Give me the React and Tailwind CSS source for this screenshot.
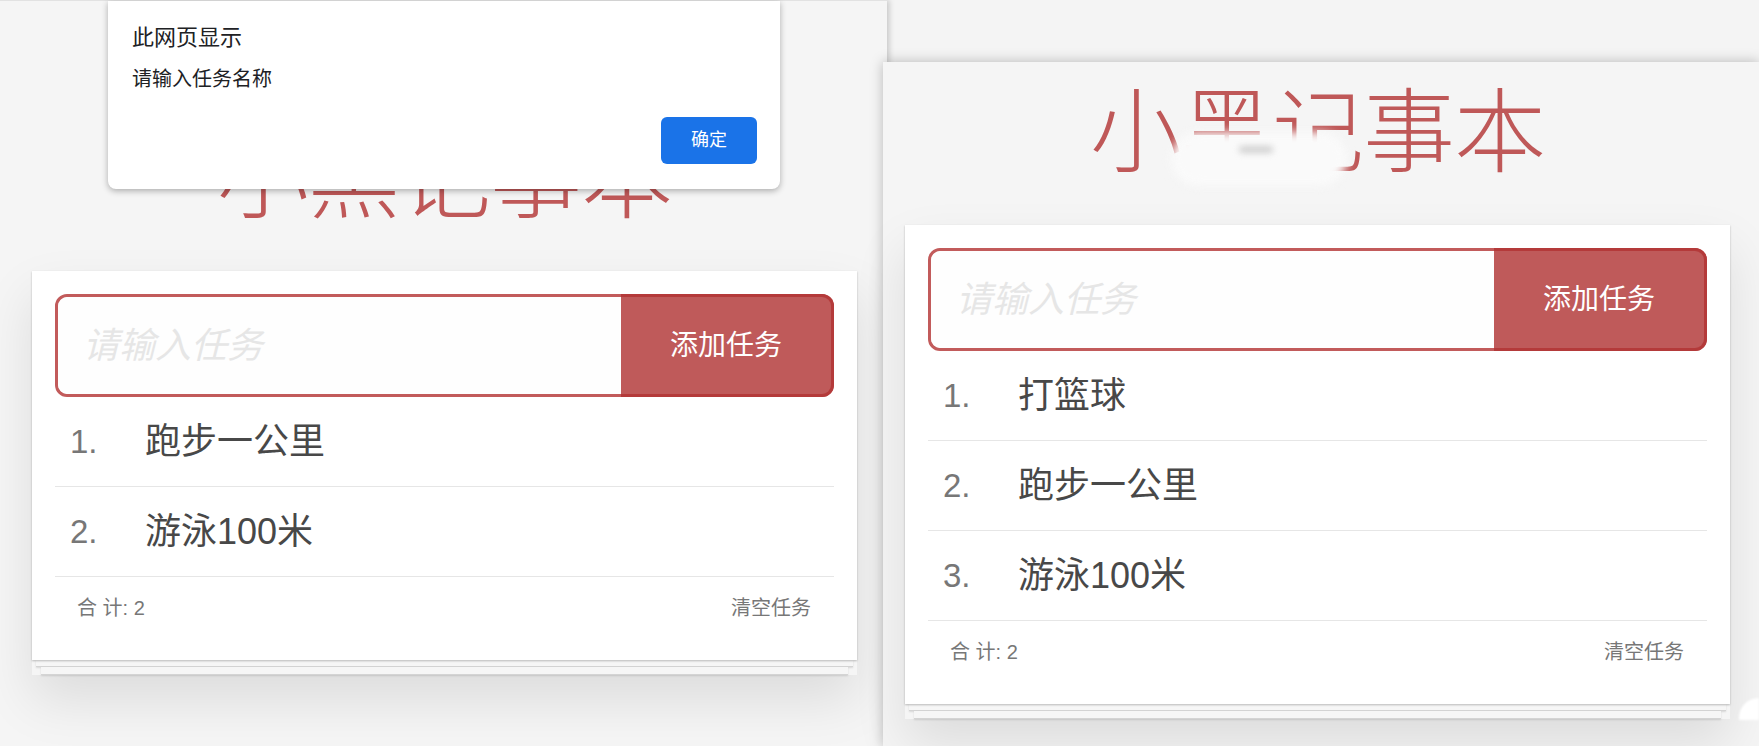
import React from 'react';

const FONT = "font-['Liberation_Sans','Noto_Sans_CJK_SC',sans-serif]";

function Panel({ items, titleClass }) {
  return (
    <div className="w-[825px]">
      <h1 className={`${titleClass} h-[90px] text-center text-[92px] leading-[90px] font-light tracking-[-1px] text-[#bf5858]`}>小黑记事本</h1>
      <div className="shadow-[0_25px_50px_rgba(0,0,0,0.1)]">
        <div className="relative z-10 bg-white p-[23px] pb-[21px] shadow-[0_1px_2px_rgba(0,0,0,0.25)]">
          <div className="flex h-[103px] rounded-[12px] border-[3px] border-[#c25b5b]">
            <input
              placeholder="请输入任务"
              className="min-w-0 flex-1 rounded-l-[10px] bg-[#fefefe] pl-[25px] text-[36px] italic text-[#484848] outline-none placeholder:text-[#e6e6e6]"
            />
            <button className="-my-[3px] -mr-[3px] w-[213px] rounded-r-[12px] border-[3px] border-l-0 border-[#b43a3a] bg-[#bf5a5a] text-[28px] text-white">
              添加任务
            </button>
          </div>
          <ul>
            {items.map((t, i) => (
              <li key={t} className="flex h-[90px] items-center border-b border-[#e6e6e6] text-[36px] text-[#484848]">
                <span className="w-[90px] pl-[15px] text-[33px] text-[#777]">{i + 1}.</span>
                <span>{t}</span>
              </li>
            ))}
          </ul>
          <div className="flex h-[62px] items-center justify-between pl-[22px] pr-[23px] text-[20px] text-[#777]">
            <span>合 计: 2</span>
            <button className="text-[#777]">清空任务</button>
          </div>
        </div>
        <div className="mx-[4px] h-[7px] border-b border-[#d4d4d4] bg-[#f6f6f6] shadow-[0_1px_2px_rgba(0,0,0,0.12)]" />
        <div className="mx-[9px] h-[8px] border-b border-[#d4d4d4] bg-[#f6f6f6] shadow-[0_1px_2px_rgba(0,0,0,0.12)]" />
      </div>
    </div>
  );
}

function Alert() {
  return (
    <div className="absolute left-[108px] top-0 z-20 h-[188px] w-[672px] rounded-b-[8px] bg-white pl-[24px] pr-[23px] pt-[22px] text-[#202124] shadow-[0_2px_6px_rgba(0,0,0,0.3)]">
      <div className="text-[22px] leading-[30px]">此网页显示</div>
      <div className="mt-[12px] text-[20px] leading-[28px]">请输入任务名称</div>
      <div className="mt-[24px] flex justify-end">
        <button className="h-[47px] w-[96px] rounded-[6px] bg-[#1a73e8] text-[18px] text-white">确定</button>
      </div>
    </div>
  );
}

export default function App() {
  return (
    <div className={`${FONT} flex h-[746px] w-[1759px] overflow-hidden bg-[#f4f4f4]`}>
      <div className="relative h-[746px] w-[887px] shrink-0 border-t border-[#e2e2e2] bg-[#f5f5f5] pl-[32px] shadow-[2px_0_6px_rgba(0,0,0,0.2)]">
        <Panel items={['跑步一公里', '游泳100米']} titleClass="mt-[133px] mb-[47px]" />
        <Alert />
      </div>
      <div className="relative z-10 -ml-[4px] mt-[62px] h-[684px] flex-1 bg-[#f5f5f5] pl-[22px] shadow-[0_0_12px_rgba(0,0,0,0.25)]">
        <Panel items={['打篮球', '跑步一公里', '游泳100米']} titleClass="mt-[26px] mb-[47px]" />
        {/* smudge over the title */}
        <div className="absolute left-[288px] top-[70px] h-[54px] w-[176px] rounded-full bg-[#fafafa] blur-[5px]" />
        <div className="absolute left-[356px] top-[84px] h-[7px] w-[34px] rounded-full bg-[#cfcfcf] blur-[3px]" />
        <div className="absolute bottom-[26px] right-0 h-[22px] w-[20px] rounded-tl-full bg-white blur-[1px]" />
      </div>
    </div>
  );
}
